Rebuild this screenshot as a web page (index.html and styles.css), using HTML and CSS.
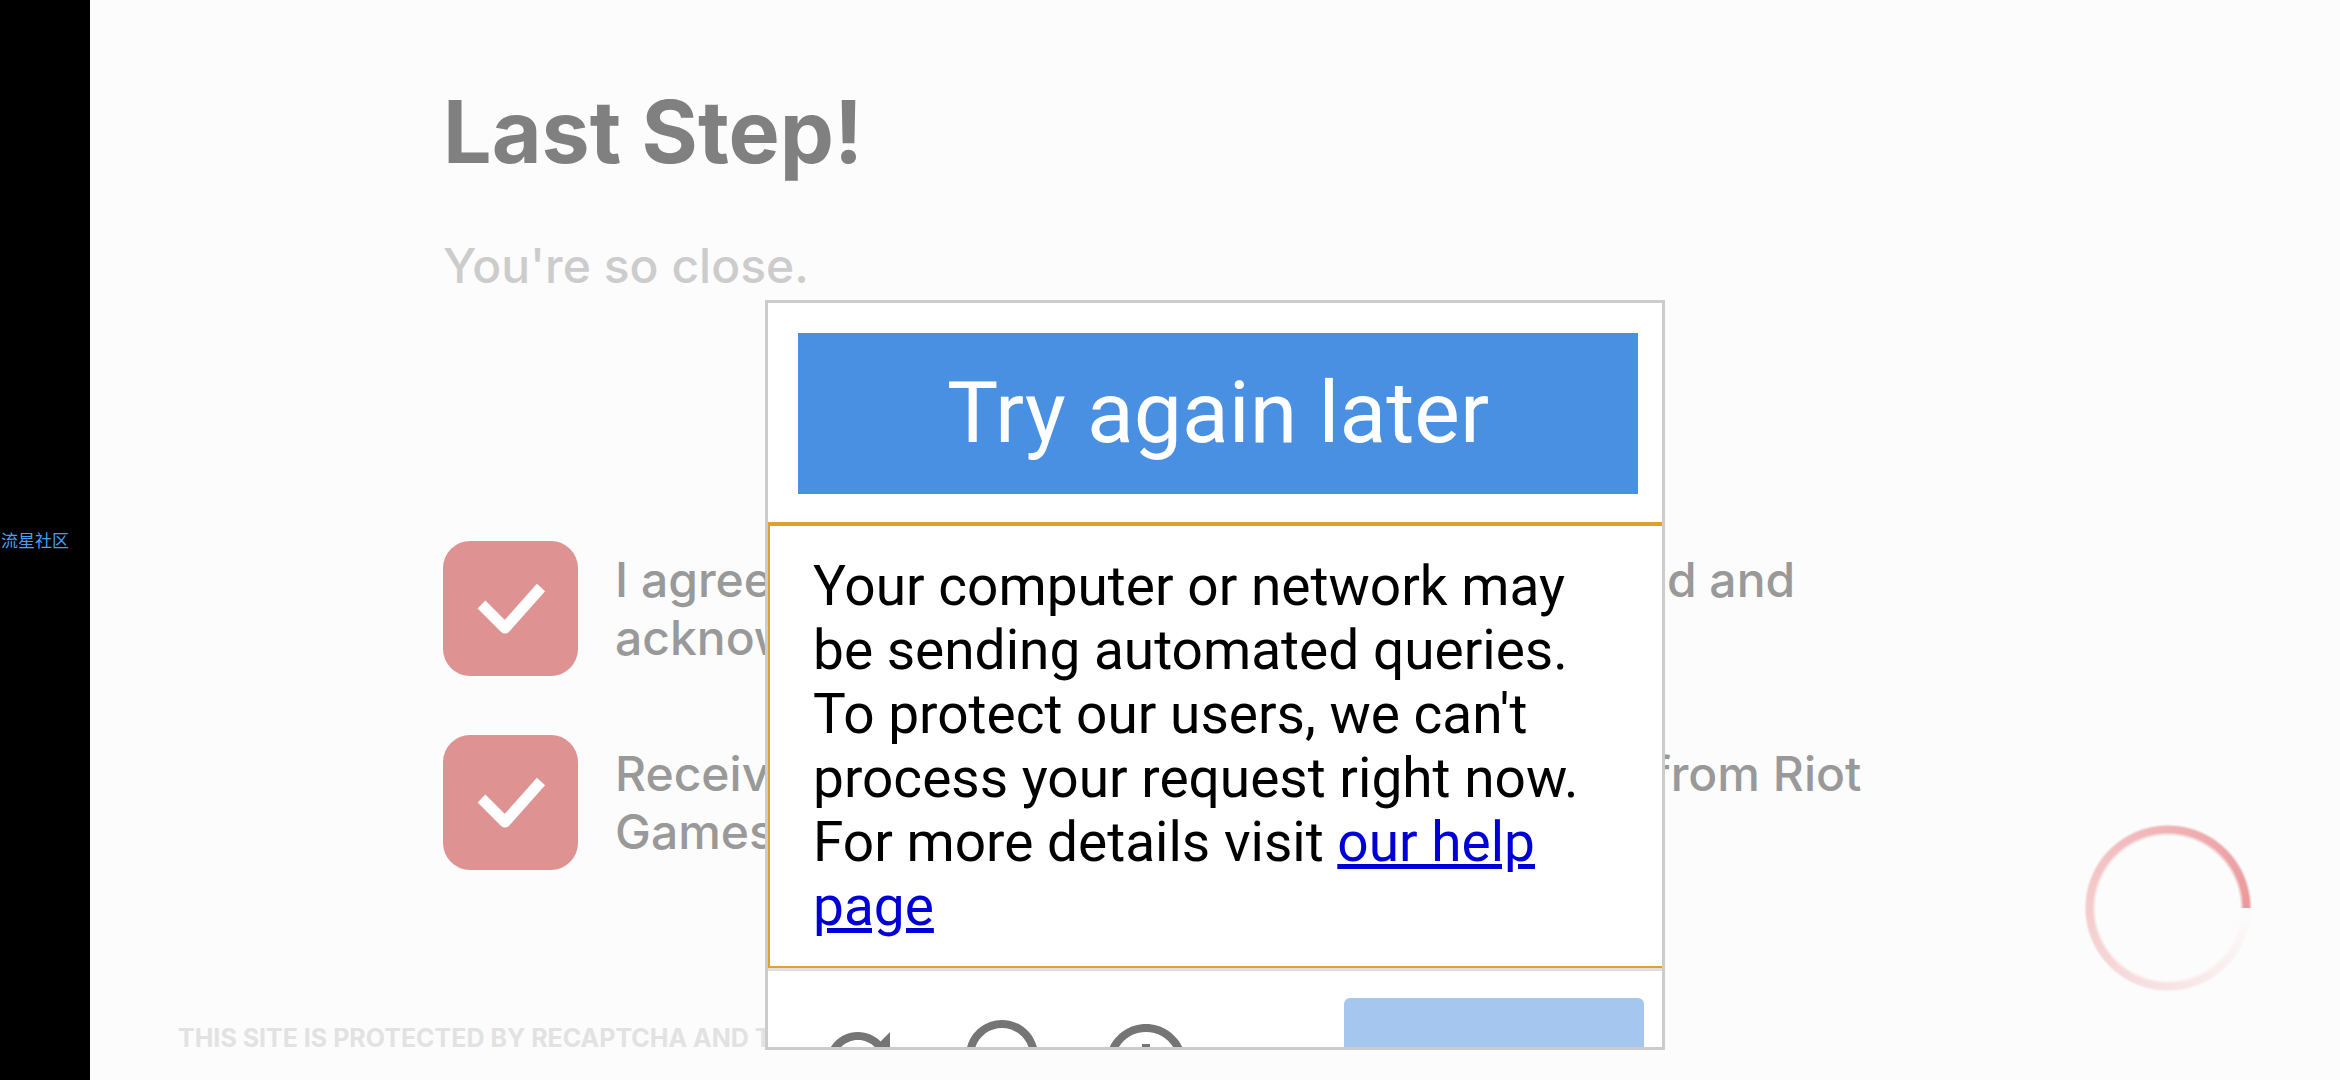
FILE: index.html
```
<!DOCTYPE html>
<html lang="en">
<head>
  <meta charset="utf-8">
  <meta name="viewport" content="width=device-width, initial-scale=1">
  <title>Last Step!</title>
  <link rel="stylesheet" href="styles.css">
</head>
<body>
  <div class="screen">
    <aside class="rail" lang="zh">流星社区</aside>
    <div class="stage">
      <main class="signup">
        <h1 class="signup-title">Last Step!</h1>
        <p class="signup-lead">You're so close.</p>
        <form class="consents">
          <div class="consent">
            <span class="tick">
              <input class="tick-input" type="checkbox" id="terms" checked>
              <svg class="tick-mark" viewBox="0 0 135 135" aria-hidden="true"><path d="M38.500 63.500 62 87 98 46.500"/></svg>
            </span>
            <label class="consent-text" for="terms">I agree to the Terms of Service, and I have read and<br>acknowledge the Privacy Notice.</label>
          </div>
          <div class="consent">
            <span class="tick">
              <input class="tick-input" type="checkbox" id="news" checked>
              <svg class="tick-mark" viewBox="0 0 135 135" aria-hidden="true"><path d="M38.500 63.500 62 87 98 46.500"/></svg>
            </span>
            <label class="consent-text" for="news">Receive news, surveys, and all special offers from Riot<br>Games by email.</label>
          </div>
        </form>
      </main>
      <footer class="legal">THIS SITE IS PROTECTED BY RECAPTCHA AND THE GOOGLE PRIVACY POLICY</footer>
      <div class="spinner" role="status" aria-label="Loading"></div>
      <section class="captcha" role="dialog" aria-labelledby="captcha-title">
        <h2 class="captcha-title" id="captcha-title">Try again later</h2>
        <p class="captcha-message">Your computer or network may be sending automated queries. To protect our users, we can't process your request right now. For more details visit <a class="captcha-link" href="#help">our help page</a></p>
        <div class="captcha-controls">
          <button class="icon-button" type="button" aria-label="Get a new challenge">
            <svg class="icon" viewBox="0 0 24 24"><path d="M17.650 6.350C16.200 4.900 14.210 4 12 4c-4.420 0-7.990 3.580-7.990 8s3.570 8 7.990 8c3.730 0 6.840-2.550 7.730-6h-2.080c-.820 2.330-3.040 4-5.650 4-3.310 0-6-2.690-6-6s2.690-6 6-6c1.660 0 3.140.690 4.220 1.780L13 11h7V4l-2.350 2.350z"/></svg>
          </button>
          <button class="icon-button" type="button" aria-label="Get an audio challenge">
            <svg class="icon" viewBox="0 0 24 24"><path d="M12 1c-4.970 0-9 4.030-9 9v7c0 1.660 1.340 3 3 3h3v-8H5v-2c0-3.870 3.130-7 7-7s7 3.130 7 7v2h-4v8h3c1.660 0 3-1.340 3-3v-7c0-4.970-4.030-9-9-9z"/></svg>
          </button>
          <button class="icon-button" type="button" aria-label="Help">
            <svg class="icon" viewBox="0 0 24 24"><path d="M11 17h2v-6h-2v6zm1-15C6.480 2 2 6.480 2 12s4.480 10 10 10 10-4.480 10-10S17.520 2 12 2zm0 18c-4.410 0-8-3.590-8-8s3.590-8 8-8 8 3.590 8 8-3.590 8-8 8zM11 9h2V7h-2v2z"/></svg>
          </button>
          <button class="verify" type="button" aria-label="Verify" disabled></button>
        </div>
      </section>
    </div>
  </div>
</body>
</html>
```

FILE: styles.css
```
* {
  box-sizing: border-box;
}

body {
  margin: 0;
  background: #fcfcfc;
  font-family: Inter, "Liberation Sans", sans-serif;
}

.screen {
  display: flex;
  min-height: 100vh;
}

.rail {
  flex: 0 0 90px;
  display: flex;
  align-items: center;
  padding-left: 1px;
  background: #000;
  color: #4a9ff0;
  font: 400 17px/24px "Noto Sans CJK SC", sans-serif;
}

.stage {
  position: relative;
  flex: 1;
  display: flex;
  flex-direction: column;
  justify-content: space-between;
  overflow: hidden;
}

.signup {
  padding: 82px 240px 0 353px;
}

.signup-title {
  margin: 0;
  color: #808080;
  font-size: 86px;
  line-height: 100px;
  font-weight: 700;
}

.signup-lead {
  margin: 54px 0 0;
  color: #ccc;
  font-size: 48px;
  line-height: 60px;
  font-weight: 500;
}

.consents {
  display: flex;
  flex-direction: column;
  gap: 59px;
  margin-top: 245px;
}

.consent {
  display: flex;
  align-items: center;
  gap: 37px;
}

.consent-text {
  color: #999;
  font-size: 48px;
  line-height: 58px;
  font-weight: 500;
  white-space: nowrap;
}

.tick {
  display: grid;
  flex: none;
}

.tick-input,
.tick-mark {
  grid-area: 1 / 1;
  width: 135px;
  height: 135px;
  margin: 0;
}

.tick-input {
  appearance: none;
  border-radius: 27px;
  background: #de9292;
}

.tick-mark {
  fill: none;
  stroke: #fff;
  stroke-width: 11;
  stroke-linejoin: round;
  pointer-events: none;
}

.legal {
  padding: 0 88px 26px;
  color: #e2e2e2;
  font-size: 25px;
  line-height: 32px;
  font-weight: 700;
}

.spinner {
  position: absolute;
  right: 88px;
  bottom: 88px;
  width: 168px;
  height: 168px;
  border-radius: 50%;
  background: conic-gradient(from 90deg, rgba(222, 60, 66, 0), rgba(222, 60, 66, .13) 25%, rgba(222, 60, 66, .25) 50%, rgba(222, 60, 66, .38) 75%, rgba(222, 60, 66, .52));
  mask: radial-gradient(circle closest-side, transparent 72px, #000 76px, #000 81px, transparent 84px);
}

.captcha {
  position: absolute;
  top: 300px;
  left: 50%;
  width: 900px;
  height: 750px;
  margin-left: -450px;
  overflow: hidden;
  border: 3px solid #ccc;
  background: #fff;
  font-family: Roboto, sans-serif;
}

.captcha-title {
  margin: 30px 24px 28px 30px;
  padding: 28px 0 29px;
  background: #4a90e2;
  color: #fff;
  font-size: 86px;
  line-height: 104px;
  font-weight: 400;
  text-align: center;
}

.captcha-message {
  margin: 0 -6px 0 0;
  padding: 28px 60px 28px 43px;
  border: 2px solid #e0a030;
  border-top-width: 4px;
  color: #000;
  font-size: 55px;
  line-height: 64px;
}

.captcha-link {
  color: #0000d6;
}

.captcha-controls {
  display: flex;
  align-items: flex-start;
  gap: 48px;
  padding: 27px 18px 0 42px;
  border-top: 3px solid #dfdfdf;
}

.icon-button {
  margin-top: 18px;
  padding: 0;
  border: 0;
  background: none;
}

.icon {
  display: block;
  width: 96px;
  height: 96px;
  fill: #757575;
}

.verify {
  width: 300px;
  height: 126px;
  margin-left: auto;
  border: 0;
  border-radius: 6px;
  background: #a4c6ef;
}
```
